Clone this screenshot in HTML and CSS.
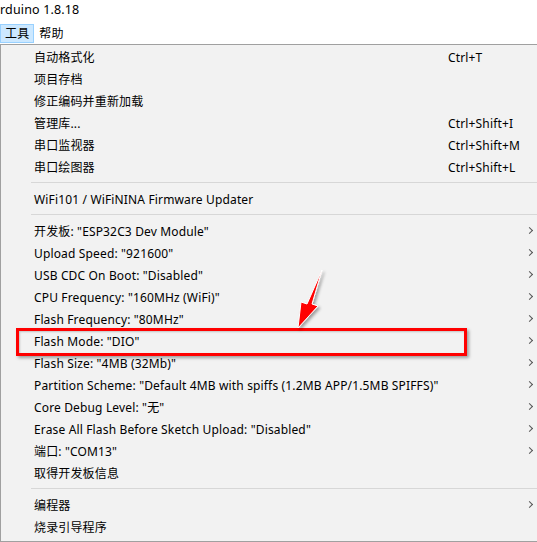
FILE: index.html
```html
<!DOCTYPE html>
<html lang="zh">
<head>
  <meta charset="UTF-8">
  <title>Arduino 1.8.18</title>
  <link rel="stylesheet" href="styles.css">
</head>
<body>
  <div class="window">
    <div class="title">rduino 1.8.18</div>
    <div class="menubar">
      <span class="menu-title active">工具</span>
      <span class="menu-title">帮助</span>
    </div>
    <div class="dropdown">
      <div class="item"><span class="label">自动格式化</span><span class="key">Ctrl+T</span></div>
      <div class="item"><span class="label">项目存档</span></div>
      <div class="item"><span class="label">修正编码并重新加载</span></div>
      <div class="item"><span class="label">管理库...</span><span class="key">Ctrl+Shift+I</span></div>
      <div class="item"><span class="label">串口监视器</span><span class="key">Ctrl+Shift+M</span></div>
      <div class="item"><span class="label">串口绘图器</span><span class="key">Ctrl+Shift+L</span></div>
      <div class="sep"></div>
      <div class="item"><span class="label">WiFi101 / WiFiNINA Firmware Updater</span></div>
      <div class="sep"></div>
      <div class="item sub"><span class="label">开发板: "ESP32C3 Dev Module"</span></div>
      <div class="item sub"><span class="label">Upload Speed: "921600"</span></div>
      <div class="item sub"><span class="label">USB CDC On Boot: "Disabled"</span></div>
      <div class="item sub"><span class="label">CPU Frequency: "160MHz (WiFi)"</span></div>
      <div class="item sub"><span class="label">Flash Frequency: "80MHz"</span></div>
      <div class="item sub"><span class="label">Flash Mode: "DIO"</span></div>
      <div class="item sub"><span class="label">Flash Size: "4MB (32Mb)"</span></div>
      <div class="item sub"><span class="label">Partition Scheme: "Default 4MB with spiffs (1.2MB APP/1.5MB SPIFFS)"</span></div>
      <div class="item sub"><span class="label">Core Debug Level: "无"</span></div>
      <div class="item sub"><span class="label">Erase All Flash Before Sketch Upload: "Disabled"</span></div>
      <div class="item sub"><span class="label">端口: "COM13"</span></div>
      <div class="item"><span class="label">取得开发板信息</span></div>
      <div class="sep"></div>
      <div class="item sub"><span class="label">编程器</span></div>
      <div class="item"><span class="label">烧录引导程序</span></div>
    </div>

    <div class="highlight"></div>
    <svg class="arrow" width="40" height="70" viewBox="0 0 40 70">
      <defs>
        <filter id="sh" x="-50%" y="-50%" width="200%" height="200%">
          <feDropShadow dx="2" dy="2" stdDeviation="1.5" flood-color="#000" flood-opacity="0.35"/>
        </filter>
      </defs>
      <polygon points="34,4 24,38 30,40 10,62 13,36 19,38" fill="#ff0000" stroke="#fff" stroke-width="1" filter="url(#sh)"/>
    </svg>
  </div>
</body>
</html>
```

FILE: styles.css
```css
body {
  margin: 0;
  background: #ffffff;
  font-family: "Noto Sans", "Noto Sans CJK SC", sans-serif;
  font-size: 12px;
  letter-spacing: 0.15px;
  color: #000;
}
.window {
  position: relative;
  width: 537px;
  height: 542px;
  overflow: hidden;
}
.title {
  height: 22px;
  line-height: 19px;
  font-size: 12.5px;
}
.menubar {
  display: flex;
  height: 22px;
  align-items: center;
}
.menu-title {
  padding: 0 4px;
  height: 19px;
  line-height: 18px;
  border: 1px solid transparent;
  box-sizing: border-box;
  white-space: nowrap;
}
.menu-title.active {
  background: #cce8ff;
  border-color: #99d1ff;
}
.dropdown {
  background: #f2f2f2;
  border: 1px solid #a0a0a0;
  border-right: none;
  display: flex;
  flex-direction: column;
  padding-top: 1px;
  height: 498px;
  box-sizing: border-box;
}
.item {
  position: relative;
  display: flex;
  align-items: center;
  height: 22px;
  padding-left: 33px;
}
.label {
  flex: 1;
  white-space: nowrap;
}
.key {
  width: 89px;
}
.item.sub::after {
  content: "";
  position: absolute;
  right: 5px;
  top: 8px;
  width: 4px;
  height: 4px;
  border-top: 1px solid #555;
  border-right: 1px solid #555;
  transform: rotate(45deg);
}
.sep {
  height: 1px;
  background: #d7d7d7;
  margin: 4px 0 5px 30px;
}
.highlight {
  position: absolute;
  left: 16px;
  top: 328px;
  width: 451px;
  height: 28px;
  border: 3px solid #ff0000;
  box-sizing: border-box;
  box-shadow: 2px 2px 3px rgba(0, 0, 0, 0.35), inset 1px 1px 2px rgba(0, 0, 0, 0.2);
}
.arrow {
  position: absolute;
  left: 288px;
  top: 266px;
}
```
